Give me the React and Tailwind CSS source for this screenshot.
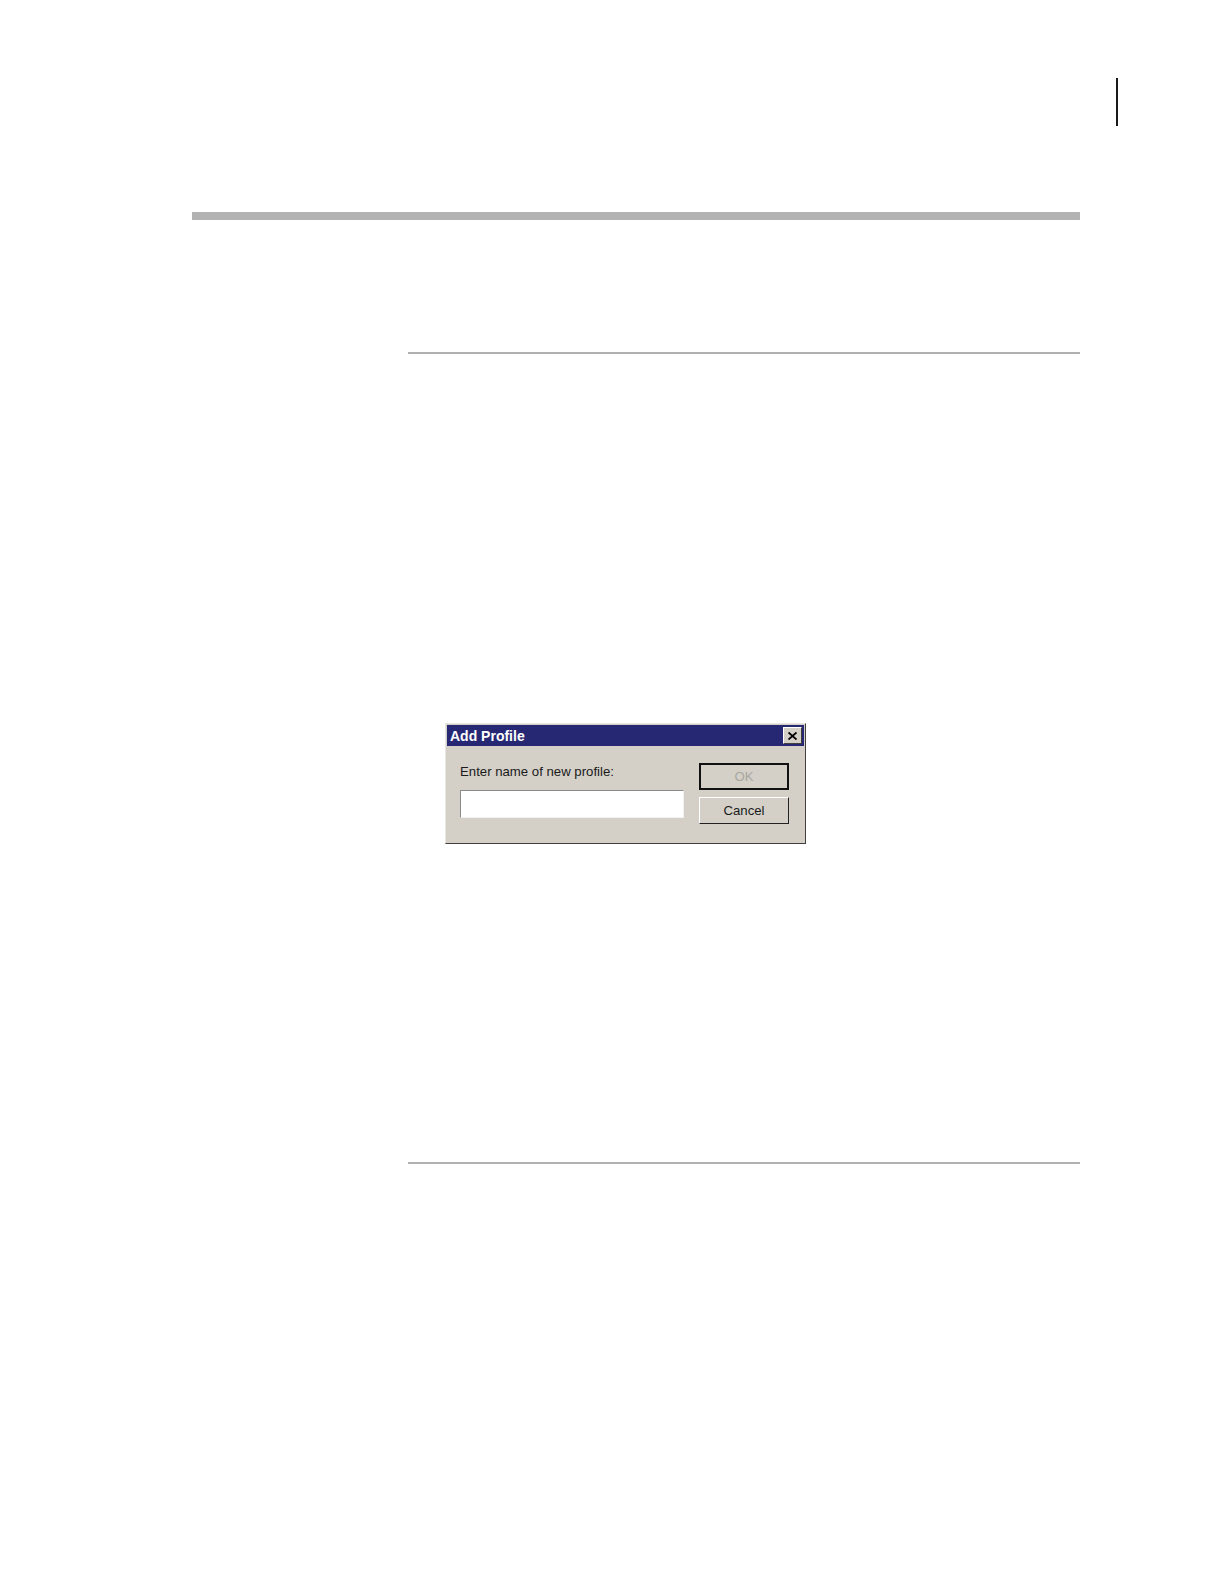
export default function App() {
  return (
    <div className="w-full h-screen bg-white overflow-hidden" style={{ fontFamily: '"Liberation Sans", Arial, sans-serif' }}>
      {/* page header marker */}
      <div className="pt-[78px] flex justify-end pr-[106px]">
        <div className="w-[2px] h-[48px] bg-[#1a1a1a]" />
      </div>

      {/* chapter rule */}
      <div className="mt-[86px] ml-[192px] w-[888px] h-[8px] bg-[#b2b2b2]" />

      {/* section rule */}
      <div className="mt-[132px] ml-[408px] w-[672px] h-[2px] bg-[#b0b0b0]" />

      {/* Add Profile dialog */}
      <div className="mt-[369px] ml-[445px] w-[361px] h-[121px] bg-[#d4d0c8] border border-t-[#e8e6e1] border-l-[#e8e6e1] border-r-[#404040] border-b-[#404040] p-px">
        <div className="flex items-center justify-between h-[21px] bg-[#272873] pl-[3px] pr-[2px]">
          <span className="text-white font-bold text-[14px] leading-none">Add Profile</span>
          <button className="w-[19px] h-[17px] bg-[#d4d0c8] border border-t-white border-l-white border-r-[#404040] border-b-[#404040] flex items-center justify-center">
            <svg width="9" height="8" viewBox="0 0 9 8">
              <path d="M0.5 0.5 L8.5 7.5 M8.5 0.5 L0.5 7.5" stroke="#000" strokeWidth="1.8" />
            </svg>
          </button>
        </div>
        <div className="flex gap-[15px] pl-[13px]">
          <div className="w-[224px] pt-[18px]">
            <div className="text-[13.2px] leading-[16px] text-[#1a1a1a]">Enter name of new profile:</div>
            <div className="mt-[10px] h-[28px] bg-white border border-t-[#8a8a8a] border-l-[#8a8a8a] border-r-[#f2f2f2] border-b-[#f2f2f2]" />
          </div>
          <div className="w-[90px] pt-[17px] flex flex-col gap-[7px]">
            <button className="h-[27px] border-2 border-[#111] bg-[#d4d0c8] text-[13.2px] text-[#a8a6a0] flex items-center justify-center">
              OK
            </button>
            <button className="h-[27px] border border-t-white border-l-white border-r-[#222] border-b-[#222] bg-[#d4d0c8] text-[13.2px] text-[#1a1a1a] flex items-center justify-center">
              Cancel
            </button>
          </div>
        </div>
      </div>

      {/* section rule */}
      <div className="mt-[318px] ml-[408px] w-[672px] h-[2px] bg-[#b0b0b0]" />
    </div>
  );
}
